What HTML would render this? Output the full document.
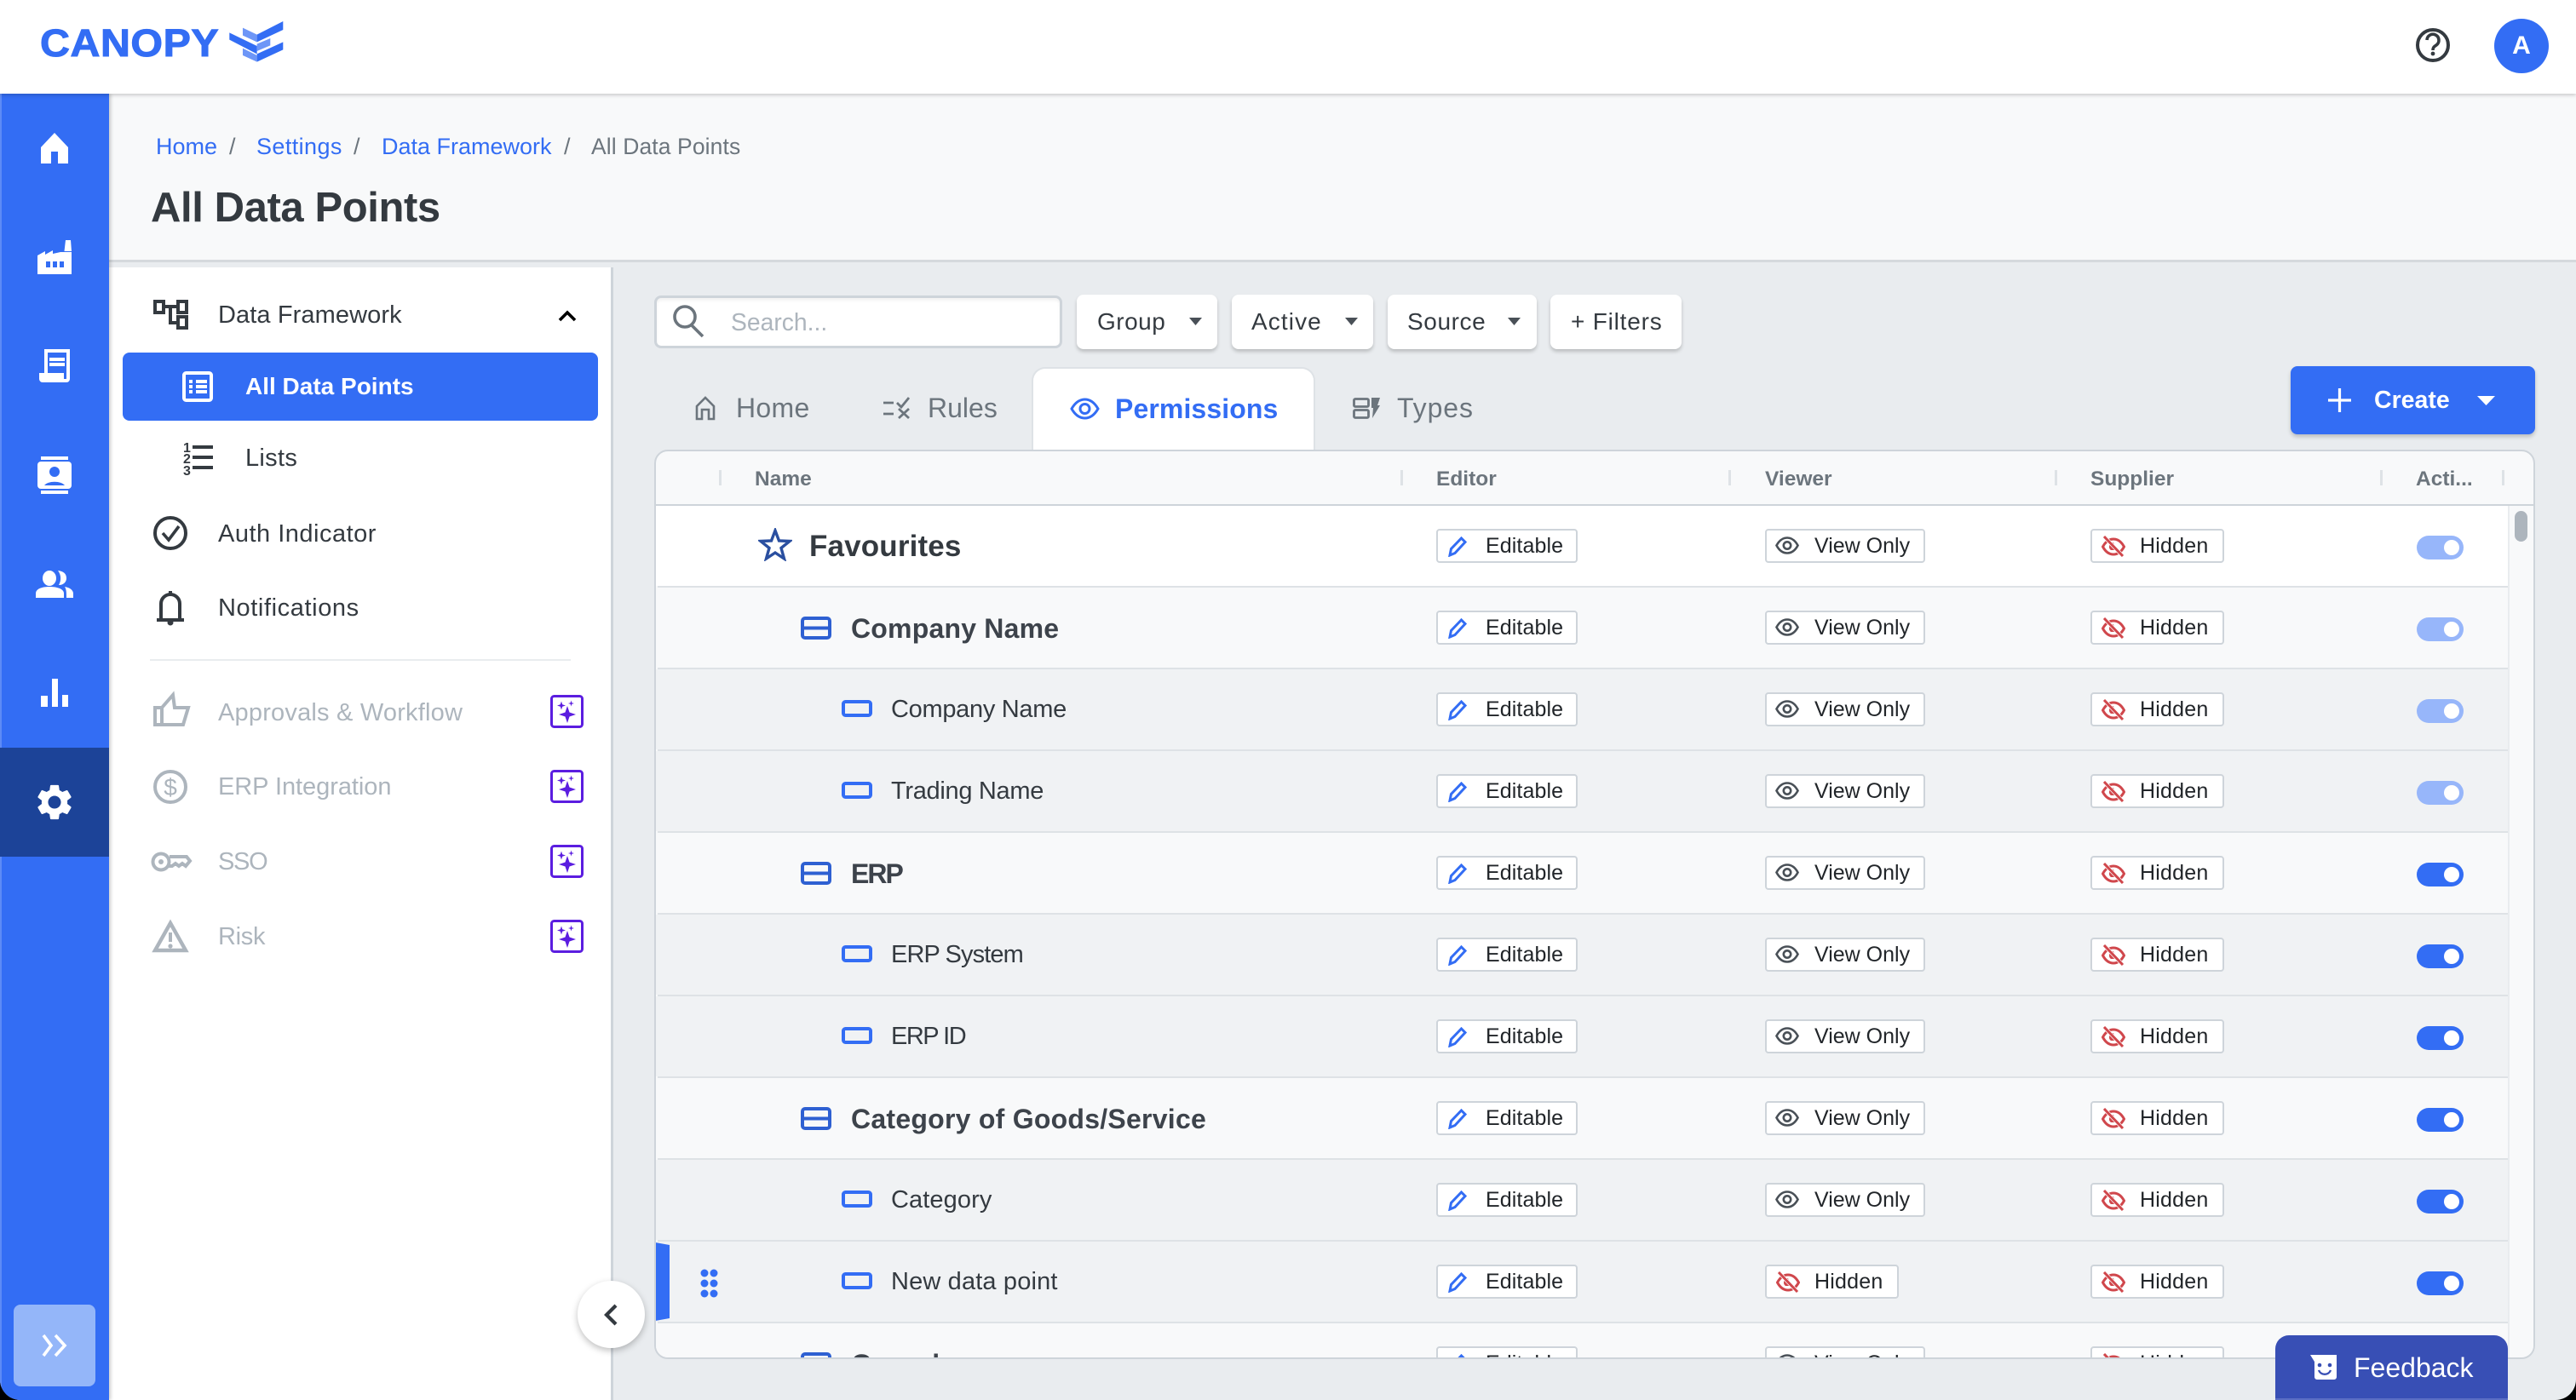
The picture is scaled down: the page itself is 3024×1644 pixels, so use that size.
<!DOCTYPE html>
<html><head><meta charset="utf-8"><title>All Data Points</title>
<style>
html,body{margin:0;padding:0;width:3024px;height:1644px;overflow:hidden;background:#000}
*{box-sizing:border-box}
body{font-family:"Liberation Sans",sans-serif;color:#343a40}
#p{position:absolute;left:0;top:0;width:3024px;height:1644px;background:#e9ecef;overflow:hidden;border-radius:0 0 24px 24px}
.a{position:absolute}
.t{position:absolute;white-space:nowrap;line-height:1}
.btn{position:absolute;top:346px;height:64px;background:#fff;border-radius:8px;box-shadow:0 3px 4px rgba(0,0,0,.2)}
#tb{position:absolute;left:768px;top:528px;width:2208px;height:1068px;background:#f8f9fa;border:2px solid #ced4da;border-radius:16px;overflow:hidden}
.r{position:absolute;left:2px;width:2172px;height:96px;border-bottom:2px solid #dee2e6}
.r:before{content:"";position:absolute;left:-2px;top:0;width:2px;height:100%;background:inherit}
.w{background:#fff}.g{background:#f8f9fa}.c{background:#f0f2f4}
.b{position:absolute;top:27px;height:40px;background:#fff;border:2px solid #ced4da;border-radius:4px;font-size:25px;line-height:36px;color:#212529;white-space:nowrap}
.b span{position:absolute;top:0}
.b svg{position:absolute}
.ed{left:914px;width:166px}.ed span{left:56px;letter-spacing:.1px}.ed svg{left:12px;top:7px;width:23px;height:24px}
.vi{left:1300px;width:188px}.vi span{left:56px}.vi svg{left:10px;top:7px;width:28px;height:21px}
.hi{width:157px}.hi span{left:56px;letter-spacing:.2px}.hi svg{left:11px;top:6px;width:28px;height:25px}
.h1{left:1300px}.h2{left:1682px}
.tg{position:absolute;left:2065px;top:35px;width:55px;height:28px;border-radius:14px;background:#336df4}
.tg.o{background:#97b6fa}
.tg:after{content:"";position:absolute;left:32px;top:5px;width:18px;height:18px;border-radius:50%;background:#fff}
.gi{position:absolute;left:168px;top:34px;width:36px;height:27px}
.ci{position:absolute;left:216px;top:36px;width:36px;height:20px}
.gt{position:absolute;left:227px;top:32px;font-size:32px;line-height:1;font-weight:700;color:#3d434b;white-space:nowrap}
.ct{position:absolute;left:274px;top:33px;font-size:29px;line-height:1;color:#343a40;white-space:nowrap}
.hd{position:absolute;top:22px;width:3px;height:18px;background:#dee2e6}
.ht{position:absolute;top:21px;font-size:24.5px;line-height:1;font-weight:700;color:#6c757d;white-space:nowrap}
.nv{font-size:29px;color:#343a40}
.dis{font-size:29px;color:#adb5bd}
</style></head><body><div id="p">
<svg width="0" height="0" style="position:absolute"><defs>
<symbol id="pen" viewBox="0 0 23 24"><path d="M2 22 L3.500 14.500 L15.500 2 L20 6.500 L8 19.500 Z" fill="none" stroke="#336df4" stroke-width="3"/></symbol>
<symbol id="eye" viewBox="0 0 28 21"><path d="M1.500 10.500 C5 4 9 1.500 14 1.500 S23 4 26.500 10.500 C23 17 19 19.500 14 19.500 S5 17 1.500 10.500Z" fill="none" stroke="#495057" stroke-width="2.600"/><circle cx="14" cy="10.500" r="4.200" fill="none" stroke="#495057" stroke-width="2.600"/></symbol>
<symbol id="hid" viewBox="0 0 28 25"><path d="M1.500 13 C5 6.500 9 4 14 4 S23 6.500 26.500 13 C23 19.500 19 22 14 22 S5 19.500 1.500 13Z" fill="none" stroke="#d0474c" stroke-width="3"/><path d="M14 8 a5 5 0 0 0 -3 9 L17 17 Z" fill="#d0474c"/><path d="M3 1 L25 24" stroke="#fff" stroke-width="4.500"/><path d="M3 1 L25 24" stroke="#d0474c" stroke-width="3"/></symbol>
<symbol id="grp" viewBox="0 0 36 27"><rect x="2" y="2" width="32" height="23" rx="3" fill="none" stroke="#2e60d2" stroke-width="4"/><path d="M2 13.500H34" stroke="#2e60d2" stroke-width="4"/></symbol>
<symbol id="chd" viewBox="0 0 36 20"><rect x="2" y="2" width="32" height="16" rx="2.500" fill="none" stroke="#336df4" stroke-width="4"/></symbol>
<symbol id="spk" viewBox="0 0 39 39"><rect x="1.500" y="1.500" width="36" height="36" rx="3" fill="#fff" stroke="#5b1de0" stroke-width="3"/><path fill="#5b1de0" d="M20 13 L22.500 20.500 30 23 22.500 25.500 20 33 17.500 25.500 10 23 17.500 20.500Z M13 7.500 L14.200 11.300 18 12.500 14.200 13.700 13 17.500 11.800 13.700 8 12.500 11.800 11.300Z M24.500 6.500 L25.300 9.200 28 10 25.300 10.800 24.500 13.500 23.700 10.800 21 10 23.700 9.200Z"/></symbol>
</defs></svg>

<!-- top bar -->
<div class="a" style="left:0;top:0;width:3024px;height:110px;background:#fff;box-shadow:0 2px 4px rgba(0,0,0,.18);z-index:3"></div>
<div class="t" style="left:47px;top:28px;font-size:45px;font-weight:700;color:#336df4;letter-spacing:.5px;-webkit-text-stroke:1px #336df4;transform:scaleX(1.075);transform-origin:0 0;z-index:4">CANOPY</div>
<div class="a" style="left:2960px;top:22px;width:64px;height:64px;margin-left:-32px;border-radius:50%;background:#336df4;color:#fff;font-weight:700;font-size:30px;line-height:64px;text-align:center;z-index:4">A</div>

<!-- page head -->
<div class="a" style="left:128px;top:110px;width:2896px;height:198px;background:#f8f9fa;border-bottom:3px solid #d5d9dd"></div>
<div class="t" style="left:183px;top:159px;font-size:27px;color:#336df4">Home</div>
<div class="t" style="left:269px;top:159px;font-size:27px;color:#6c757d">/</div>
<div class="t" style="left:301px;top:159px;font-size:27px;letter-spacing:.4px;color:#336df4">Settings</div>
<div class="t" style="left:415px;top:159px;font-size:27px;color:#6c757d">/</div>
<div class="t" style="left:448px;top:159px;font-size:27px;color:#336df4">Data Framework</div>
<div class="t" style="left:662px;top:159px;font-size:27px;color:#6c757d">/</div>
<div class="t" style="left:694px;top:159px;font-size:26.5px;letter-spacing:.1px;color:#6c757d">All Data Points</div>
<div class="t" style="left:177px;top:220px;font-size:49px;letter-spacing:-.4px;font-weight:700;color:#343a40">All Data Points</div>

<!-- sidebar -->
<div class="a" style="left:0;top:110px;width:128px;height:1534px;background:#336df4;border-left:2px solid #5d8bf6;box-shadow:2px 0 4px rgba(0,0,0,.2);z-index:2"></div>
<div class="a" style="left:0;top:878px;width:128px;height:128px;background:#1c4398;z-index:2"></div>
<div class="a" style="left:16px;top:1532px;width:96px;height:96px;background:#94b6f9;border-radius:8px;z-index:2"></div>

<!-- nav panel -->
<div class="a" style="left:128px;top:314px;width:592px;height:1330px;background:#fff;border-right:3px solid #ced4da"></div>
<div class="a" style="left:144px;top:414px;width:558px;height:80px;background:#336df4;border-radius:8px"></div>
<div class="t nv" style="left:256px;top:356px;letter-spacing:.1px">Data Framework</div>
<div class="t" style="left:288px;top:440px;font-size:28px;font-weight:700;color:#fff">All Data Points</div>
<div class="t nv" style="left:288px;top:524px;letter-spacing:.3px">Lists</div>
<div class="t nv" style="left:256px;top:613px;letter-spacing:.5px">Auth Indicator</div>
<div class="t nv" style="left:256px;top:700px;letter-spacing:.6px">Notifications</div>
<div class="a" style="left:176px;top:774px;width:494px;height:2px;background:#e9ecef"></div>
<div class="t dis" style="left:256px;top:823px;letter-spacing:.2px">Approvals &amp; Workflow</div>
<div class="t dis" style="left:256px;top:910px;letter-spacing:-.05px">ERP Integration</div>
<div class="t dis" style="left:256px;top:998px;letter-spacing:-1.300px">SSO</div>
<div class="t dis" style="left:256px;top:1086px;letter-spacing:-.3px">Risk</div>
<svg class="a" style="left:646px;top:816px" width="39" height="39"><use href="#spk"/></svg>
<svg class="a" style="left:646px;top:904px" width="39" height="39"><use href="#spk"/></svg>
<svg class="a" style="left:646px;top:992px" width="39" height="39"><use href="#spk"/></svg>
<svg class="a" style="left:646px;top:1080px" width="39" height="39"><use href="#spk"/></svg>

<!-- toolbar -->
<div class="a" style="left:768px;top:347px;width:479px;height:62px;background:#fff;border:3px solid #ced4da;border-radius:8px;box-shadow:inset 0 3px 3px rgba(0,0,0,.05)"></div>
<div class="t" style="left:858px;top:364px;font-size:28.3px;color:#adb5bd">Search...</div>
<div class="btn" style="left:1264px;width:165px"></div>
<div class="t" style="left:1288px;top:364px;font-size:28px;letter-spacing:.5px;color:#343a40">Group</div>
<div class="btn" style="left:1446px;width:166px"></div>
<div class="t" style="left:1469px;top:364px;font-size:28px;letter-spacing:1.100px;color:#343a40">Active</div>
<div class="btn" style="left:1629px;width:175px"></div>
<div class="t" style="left:1652px;top:364px;font-size:28px;letter-spacing:.6px;color:#343a40">Source</div>
<div class="btn" style="left:1820px;width:154px"></div>
<div class="t" style="left:1844px;top:364px;font-size:28px;letter-spacing:.8px;color:#343a40">+ Filters</div>

<!-- tabs -->
<div class="a" style="left:1211px;top:431px;width:333px;height:99px;background:#fff;border:2px solid #dee2e6;border-bottom:0;border-radius:16px 16px 0 0"></div>
<div class="t" style="left:864px;top:463px;font-size:32px;letter-spacing:.3px;color:#6c757d">Home</div>
<div class="t" style="left:1089px;top:463px;font-size:32px;color:#6c757d">Rules</div>
<div class="t" style="left:1309px;top:464px;font-size:32px;letter-spacing:.1px;font-weight:700;color:#336df4">Permissions</div>
<div class="t" style="left:1640px;top:463px;font-size:32px;letter-spacing:.9px;color:#6c757d">Types</div>
<div class="a" style="left:2689px;top:430px;width:287px;height:80px;background:#336df4;border-radius:8px;box-shadow:0 3px 5px rgba(0,0,0,.2)"></div>
<div class="t" style="left:2787px;top:456px;font-size:28.5px;font-weight:700;color:#fff">Create</div>

<!-- table -->
<div id="tb">
 <div class="hd" style="left:74px"></div><div class="ht" style="left:116px">Name</div>
 <div class="hd" style="left:874px"></div><div class="ht" style="left:916px">Editor</div>
 <div class="hd" style="left:1259px"></div><div class="ht" style="left:1302px">Viewer</div>
 <div class="hd" style="left:1642px"></div><div class="ht" style="left:1684px">Supplier</div>
 <div class="hd" style="left:2024px"></div><div class="ht" style="left:2066px">Acti...</div>
 <div class="hd" style="left:2167px"></div>
 <div class="a" style="left:0;top:62px;width:2204px;height:3px;background:#ced4da"></div>

 <div class="r w" style="top:64px">
  <svg class="a" style="left:118px;top:26px" width="40" height="39" viewBox="0 0 40 39"><path d="M20 3 L24.500 15 L37 15.500 L27 23.500 L30.500 36 L20 29 L9.500 36 L13 23.500 L3 15.500 L15.500 15Z" fill="none" stroke="#2a4fa0" stroke-width="3.400"/></svg>
  <span style="position:absolute;left:178px;top:30px;font-size:35px;letter-spacing:.15px;line-height:1;font-weight:700;color:#343a40;white-space:nowrap">Favourites</span>
  <div class="b ed"><svg><use href="#pen"/></svg><span>Editable</span></div>
  <div class="b vi"><svg><use href="#eye"/></svg><span>View Only</span></div>
  <div class="b hi h2"><svg><use href="#hid"/></svg><span>Hidden</span></div>
  <div class="tg o"></div>
 </div>
 <div class="r g" style="top:160px">
  <svg class="gi"><use href="#grp"/></svg><span class="gt" style="letter-spacing:.2px">Company Name</span>
  <div class="b ed"><svg><use href="#pen"/></svg><span>Editable</span></div>
  <div class="b vi"><svg><use href="#eye"/></svg><span>View Only</span></div>
  <div class="b hi h2"><svg><use href="#hid"/></svg><span>Hidden</span></div>
  <div class="tg o"></div>
 </div>
 <div class="r c" style="top:256px">
  <svg class="ci"><use href="#chd"/></svg><span class="ct" style="letter-spacing:-.3px">Company Name</span>
  <div class="b ed"><svg><use href="#pen"/></svg><span>Editable</span></div>
  <div class="b vi"><svg><use href="#eye"/></svg><span>View Only</span></div>
  <div class="b hi h2"><svg><use href="#hid"/></svg><span>Hidden</span></div>
  <div class="tg o"></div>
 </div>
 <div class="r c" style="top:352px">
  <svg class="ci"><use href="#chd"/></svg><span class="ct" style="letter-spacing:-.3px">Trading Name</span>
  <div class="b ed"><svg><use href="#pen"/></svg><span>Editable</span></div>
  <div class="b vi"><svg><use href="#eye"/></svg><span>View Only</span></div>
  <div class="b hi h2"><svg><use href="#hid"/></svg><span>Hidden</span></div>
  <div class="tg o"></div>
 </div>
 <div class="r g" style="top:448px">
  <svg class="gi"><use href="#grp"/></svg><span class="gt" style="letter-spacing:-2px">ERP</span>
  <div class="b ed"><svg><use href="#pen"/></svg><span>Editable</span></div>
  <div class="b vi"><svg><use href="#eye"/></svg><span>View Only</span></div>
  <div class="b hi h2"><svg><use href="#hid"/></svg><span>Hidden</span></div>
  <div class="tg"></div>
 </div>
 <div class="r c" style="top:544px">
  <svg class="ci"><use href="#chd"/></svg><span class="ct" style="letter-spacing:-.9px">ERP System</span>
  <div class="b ed"><svg><use href="#pen"/></svg><span>Editable</span></div>
  <div class="b vi"><svg><use href="#eye"/></svg><span>View Only</span></div>
  <div class="b hi h2"><svg><use href="#hid"/></svg><span>Hidden</span></div>
  <div class="tg"></div>
 </div>
 <div class="r c" style="top:640px">
  <svg class="ci"><use href="#chd"/></svg><span class="ct" style="letter-spacing:-1.500px">ERP ID</span>
  <div class="b ed"><svg><use href="#pen"/></svg><span>Editable</span></div>
  <div class="b vi"><svg><use href="#eye"/></svg><span>View Only</span></div>
  <div class="b hi h2"><svg><use href="#hid"/></svg><span>Hidden</span></div>
  <div class="tg"></div>
 </div>
 <div class="r g" style="top:736px">
  <svg class="gi"><use href="#grp"/></svg><span class="gt" style="letter-spacing:.25px">Category of Goods/Service</span>
  <div class="b ed"><svg><use href="#pen"/></svg><span>Editable</span></div>
  <div class="b vi"><svg><use href="#eye"/></svg><span>View Only</span></div>
  <div class="b hi h2"><svg><use href="#hid"/></svg><span>Hidden</span></div>
  <div class="tg"></div>
 </div>
 <div class="r c" style="top:832px">
  <svg class="ci"><use href="#chd"/></svg><span class="ct" style="letter-spacing:.1px">Category</span>
  <div class="b ed"><svg><use href="#pen"/></svg><span>Editable</span></div>
  <div class="b vi"><svg><use href="#eye"/></svg><span>View Only</span></div>
  <div class="b hi h2"><svg><use href="#hid"/></svg><span>Hidden</span></div>
  <div class="tg"></div>
 </div>
 <div class="r c" style="top:928px">
  <div class="a" style="left:-3px;top:1px;width:17px;height:92px;background:#336df4;clip-path:polygon(0 0,100% 3px,100% calc(100% - 3px),0 100%)"></div>
  <svg class="a" style="left:50px;top:32px" width="22" height="34"><g fill="#336df4"><ellipse cx="5" cy="5" rx="4.500" ry="4.500"/><ellipse cx="16" cy="5" rx="4.500" ry="4.500"/><ellipse cx="5" cy="17" rx="4.500" ry="4.500"/><ellipse cx="16" cy="17" rx="4.500" ry="4.500"/><ellipse cx="5" cy="29" rx="4.500" ry="4.500"/><ellipse cx="16" cy="29" rx="4.500" ry="4.500"/></g></svg>
  <svg class="ci"><use href="#chd"/></svg><span class="ct" style="letter-spacing:.15px">New data point</span>
  <div class="b ed"><svg><use href="#pen"/></svg><span>Editable</span></div>
  <div class="b hi h1"><svg><use href="#hid"/></svg><span>Hidden</span></div>
  <div class="b hi h2"><svg><use href="#hid"/></svg><span>Hidden</span></div>
  <div class="tg"></div>
 </div>
 <div class="r g" style="top:1024px">
  <svg class="gi"><use href="#grp"/></svg><span class="gt" style="letter-spacing:-2.500px">General</span>
  <div class="b ed"><svg><use href="#pen"/></svg><span>Editable</span></div>
  <div class="b vi"><svg><use href="#eye"/></svg><span>View Only</span></div>
  <div class="b hi h2"><svg><use href="#hid"/></svg><span>Hidden</span></div>
 </div>
 <div class="a" style="left:2174px;top:64px;width:32px;height:1010px;background:#f8f9fa;border-left:2px solid #e9ecef"></div>
 <div class="a" style="left:2182px;top:70px;width:15px;height:36px;background:#adb5bd;border-radius:8px"></div>
</div>

<!-- feedback -->
<div class="a" style="left:2671px;top:1568px;width:273px;height:76px;background:#384fb5;border-radius:16px 16px 0 0;border-bottom:2px solid #5b6ec4;z-index:3"></div>
<div class="t" style="left:2763px;top:1590px;font-size:32px;color:#fff;z-index:4">Feedback</div>

<!-- collapse circle -->
<div class="a" style="left:678px;top:1504px;width:79px;height:79px;border-radius:50%;background:#fff;box-shadow:0 3px 8px rgba(0,0,0,.25);z-index:3"></div>

<!-- icon overlay -->
<svg class="a" style="left:0;top:0;z-index:5" width="3024" height="1644" viewBox="0 0 3024 1644">
 <!-- logo -->
 <g transform="translate(30 10) scale(.3333)">
  <path fill="#6d96f7" d="M765 68 815 92 815 118 765 95Z M815 125 862 105 862 130 815 150Z M765 140 815 165 815 188 765 165Z"/>
  <path fill="#336df4" d="M718 85 815 132 815 160 718 110Z M815 92 907 45 907 75 815 118Z M815 160 907 118 907 145 815 188Z"/>
 </g>
 <!-- help -->
 <circle cx="2856" cy="53" r="18" fill="none" stroke="#343a40" stroke-width="4"/>
 <path d="M2849 47 a7 7 0 1 1 11 6 c-3 2 -4 3 -4 6" fill="none" stroke="#343a40" stroke-width="3.600"/>
 <circle cx="2856" cy="63" r="2.400" fill="#343a40"/>
 <!-- sidebar icons -->
 <path fill="#fff" d="M64 156 L80 173 V192 H68 V178 H60 V192 H48 V173Z"/>
 <path fill="#fff" d="M75.500 295 L77 282 H83 L84 295Z M44 322 V300 L53 295 V299 L62 294 V298 L71 296 H84 V322Z"/>
 <path fill="#336df4" d="M54 307h5v7h-5z M62 307h5v7h-5z M70 307h5v7h-5z"/>
 <path fill="#fff" d="M52 410 H82 V445 a4 4 0 0 1 -4 4 H50 a4 4 0 0 1 -4 -4 V438 H52Z"/>
 <path fill="#336df4" d="M56 414 H78 V445 H75 V438 H56Z"/>
 <path fill="#fff" d="M58 420h18v4h-18z M58 426h18v4h-18z"/>
 <path fill="#fff" d="M48 536h32v4h-32z M48 576h32v4h-32z"/>
 <rect x="44" y="542" width="40" height="32" rx="4" fill="#fff"/>
 <circle cx="64" cy="554" r="6" fill="#336df4"/>
 <path fill="#336df4" d="M52 570 a13 7 0 0 1 24 0Z"/>
 <ellipse cx="58" cy="679" rx="8" ry="9" fill="#fff"/>
 <path fill="#fff" d="M42 702 V697 C42 691 50 689 58 689 S75 691 75 697 V702Z"/>
 <path fill="#fff" d="M68 670 C76 671 78 675 78 679 S75 687 69 687 C72 682 72 675 68 670Z M76 689 C82 690 86 693 86 697 V702 H78 C78 696 78 692 76 689Z"/>
 <path fill="#fff" d="M48 817h8v13h-8z M61 797h7v33h-7z M73 816h7v14h-7z"/>
 <path fill="#fff" fill-rule="evenodd" transform="translate(38.800 916.800) scale(2.100)" d="M19.14 12.94c.04-.3.06-.61.06-.94 0-.32-.02-.64-.07-.94l2.03-1.58c.18-.14.23-.41.12-.61l-1.92-3.32c-.12-.22-.37-.29-.59-.22l-2.39.96c-.5-.38-1.03-.7-1.62-.94l-.36-2.54c-.04-.24-.24-.41-.48-.41h-3.84c-.24 0-.43.17-.47.41l-.36 2.54c-.59.24-1.13.57-1.62.94l-2.39-.96c-.22-.08-.47 0-.59.22L2.74 8.87c-.12.21-.08.47.12.61l2.03 1.58c-.05.3-.09.63-.09.94s.02.64.07.94l-2.03 1.58c-.18.14-.23.41-.12.61l1.92 3.32c.12.22.37.29.59.22l2.39-.96c.5.38 1.03.7 1.62.94l.36 2.54c.05.24.24.41.48.41h3.84c.24 0 .44-.17.47-.41l.36-2.54c.59-.24 1.13-.56 1.62-.94l2.39.96c.22.08.47 0 .59-.22l1.92-3.32c.12-.22.07-.47-.12-.61l-2.01-1.58zM12 15.6c-1.98 0-3.6-1.62-3.6-3.6s1.62-3.6 3.6-3.6 3.6 1.62 3.6 3.6-1.62 3.6-3.6 3.6z"/>
 <path d="M51 1568 L60 1580 L51 1592 M65 1568 L76 1580 L65 1592" fill="none" stroke="#fff" stroke-width="3.600"/>
 <path d="M723 1533 L712 1544 L723 1555" fill="none" stroke="#343a40" stroke-width="4.200"/>
 <!-- nav icons -->
 <g fill="none" stroke="#343a40" stroke-width="4">
  <rect x="182" y="354" width="10" height="13"/><rect x="209" y="354" width="10" height="13"/><rect x="209" y="372" width="10" height="13"/>
  <path d="M192 360 H209 M200 360 V379 H209"/>
 </g>
 <path d="M657 376 L666 367 L675 376" fill="none" stroke="#000" stroke-width="3.600"/>
 <rect x="216" y="438" width="32" height="32" rx="2.500" fill="none" stroke="#fff" stroke-width="4"/>
 <path fill="#fff" d="M222 446h4v4h-4z M222 452h4v4h-4z M222 458h4v4h-4z M230 446h13v4h-13z M230 452h13v4h-13z M230 458h13v4h-13z"/>
 <text x="215" y="531" font-family="Liberation Sans" font-weight="700" font-size="16" fill="#343a40">1</text>
 <text x="215" y="544" font-family="Liberation Sans" font-weight="700" font-size="16" fill="#343a40">2</text>
 <text x="215" y="558" font-family="Liberation Sans" font-weight="700" font-size="16" fill="#343a40">3</text>
 <path fill="#343a40" d="M226 523h24v4h-24z M226 535h24v4h-24z M226 547h24v4h-24z"/>
 <circle cx="200" cy="626" r="18" fill="none" stroke="#343a40" stroke-width="4"/>
 <path d="M191 626 L198 634 L210 618" fill="none" stroke="#343a40" stroke-width="3.600"/>
 <path d="M189 727 V709 a11 11 0 0 1 22 0 V727 M184 728 H216 M200 694 V698" fill="none" stroke="#343a40" stroke-width="4"/>
 <circle cx="200" cy="731" r="3.500" fill="#343a40"/>
 <g fill="none" stroke="#adb5bd" stroke-width="4">
  <path d="M182 831 H190 V851 H182Z M190 831 L203 816 L205 831 H221 L215 851 H190"/>
  <circle cx="200" cy="924" r="18"/>
  <circle cx="189" cy="1012" r="9.500"/>
  <path d="M199 1006 H219 L223 1011 L218 1017 L214 1014 L210 1017 L206 1014 L202 1017 H197"/>
  <path d="M200 1084 L218 1116 H182Z" stroke-width="4.400"/>
  <path d="M200 1095 V1106"/>
 </g>
 <circle cx="189" cy="1012" r="3" fill="#adb5bd"/>
 <circle cx="200" cy="1111" r="2.600" fill="#adb5bd"/>
 <text x="200" y="934" text-anchor="middle" font-family="Liberation Sans" font-size="28" fill="#adb5bd">$</text>
 <!-- search + carets -->
 <circle cx="804" cy="372" r="12" fill="none" stroke="#6c757d" stroke-width="3.600"/>
 <path d="M812 382 L825 395" stroke="#6c757d" stroke-width="3.600"/>
 <path fill="#495057" d="M1396 373h15l-7.500 9z M1579 373h15l-7.500 9z M1770 373h15l-7.500 9z"/>
 <!-- tab icons -->
 <path d="M818 492 V477 L828 467 L838 477 V492 H832 V481 H824 V492Z" fill="none" stroke="#6c757d" stroke-width="2.600"/>
 <path d="M1037 473 H1049 M1037 486 H1049 M1053 473 L1058 478 L1067 467 M1055 480 L1067 491 M1067 480 L1055 491" fill="none" stroke="#6c757d" stroke-width="2.800"/>
 <path d="M1258 480 C1262 473 1267 469 1273.500 469 S1285 473 1289 480 C1285 487 1280 491 1273.500 491 S1262 487 1258 480Z" fill="none" stroke="#336df4" stroke-width="3"/>
 <circle cx="1273.500" cy="480" r="5.500" fill="none" stroke="#336df4" stroke-width="3"/>
 <g fill="none" stroke="#6c757d" stroke-width="2.800"><rect x="1589.500" y="468.500" width="17" height="9" rx="1.500"/><rect x="1589.500" y="481.500" width="17" height="9" rx="1.500"/></g>
 <path fill="#6c757d" d="M1610 467 H1620 L1617 476 H1620 L1611 491 L1612 479 H1610Z"/>
 <!-- create -->
 <path d="M2733 470 H2760 M2746.500 456 V484" stroke="#fff" stroke-width="3.200"/>
 <path fill="#fff" d="M2908 465 H2929 L2918.500 476Z"/>
 <!-- feedback icon -->
 <path fill="#fff" d="M2712 1591 H2743 V1617 a3 3 0 0 1 -3 3 H2720 a3 3 0 0 1 -3 -3 V1599Z"/>
 <circle cx="2723" cy="1603" r="2.300" fill="#384fb5"/><circle cx="2735" cy="1603" r="2.300" fill="#384fb5"/>
 <path d="M2722 1609 a7.500 7.500 0 0 0 14 0" fill="none" stroke="#384fb5" stroke-width="2.400"/>
</svg>
</div></body></html>
